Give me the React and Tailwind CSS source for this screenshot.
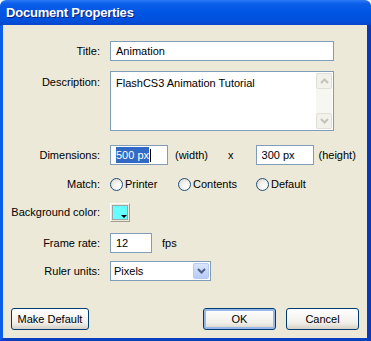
import { useState } from "react";

const inputBox = "h-[20px] border border-[#7f9db9] bg-white px-[5px] flex items-center";

const Label = ({ children, top = false }) => (
  <div className={`w-[97px] shrink-0 text-right ${top ? "pt-[3px] self-start" : ""}`}>{children}</div>
);

const Radio = ({ label, width }) => (
  <div className="flex shrink-0 items-center gap-[2px]" style={{ width }}>
    <span className="h-[13px] w-[13px] shrink-0 rounded-full border border-[#1c5180] bg-[radial-gradient(circle_at_70%_70%,#ffffff_0%,#f4f3ee_40%,#d8d4c6_100%)]" />
    <span>{label}</span>
  </div>
);

const XpButton = ({ children, width, focused = false }) => (
  <button
    className={`h-[22px] rounded-[3px] border border-[#003c74] bg-[linear-gradient(#ffffff,#f0efe9_70%,#d6d0c5)] ${
      focused ? "shadow-[inset_0_0_0_2px_#98b8ea]" : ""
    }`}
    style={{ width }}
  >
    {children}
  </button>
);

export default function App() {
  const [title] = useState("Animation");

  return (
    <div
      className="flex h-[341px] w-[371px] flex-col text-[11px] text-black"
      style={{ fontFamily: '"Liberation Sans", Arial, sans-serif' }}
    >
      <div className="flex h-[25px] shrink-0 items-center rounded-t-[6px] bg-[linear-gradient(#2d7bf6,#0a5ee9_15%,#0054e3_55%,#0150db_85%,#0a45c9)] pl-[6px]">
        <span className="text-[13px] font-bold tracking-[-0.2px] text-white [text-shadow:1px_1px_0_#0a1e80]">
          Document Properties
        </span>
      </div>

      <div className="flex flex-1 flex-col border-b-[3px] border-l-[3px] border-r-[4px] border-b-[#0a3fc0] border-l-[#0a5ee9] border-r-[#0a38b8] bg-[#ece9d8]">
        <div className="mt-[16px] flex items-center">
          <Label>Title:</Label>
          <div className={`${inputBox} ml-[10px] w-[224px]`}>{title}</div>
        </div>

        <div className="mt-[10px] flex">
          <Label top>Description:</Label>
          <div className="ml-[10px] flex h-[60px] w-[224px] border border-[#7f9db9] bg-white">
            <div className="flex-1 px-[5px] pt-[3px]">FlashCS3 Animation Tutorial</div>
            <div className="my-[1px] mr-[1px] flex w-[16px] flex-col justify-between bg-[#f7f7f2]">
              <div className="flex h-[16px] items-center justify-center rounded-[2px] border border-[#e2e0d6] bg-[#f2f1ea]">
                <svg width="9" height="6" viewBox="0 0 9 6">
                  <path d="M1 5 L4.5 1.5 L8 5" fill="none" stroke="#c5c3b8" strokeWidth="2" />
                </svg>
              </div>
              <div className="flex h-[16px] items-center justify-center rounded-[2px] border border-[#e2e0d6] bg-[#f2f1ea]">
                <svg width="9" height="6" viewBox="0 0 9 6">
                  <path d="M1 1 L4.5 4.5 L8 1" fill="none" stroke="#c5c3b8" strokeWidth="2" />
                </svg>
              </div>
            </div>
          </div>
        </div>

        <div className="mt-[14px] flex items-center">
          <Label>Dimensions:</Label>
          <div className={`${inputBox} ml-[10px] w-[58px]`}>
            <span className="bg-[#316ac5] text-white">500 px</span>
            <span className="ml-[1px] h-[13px] w-px bg-black" />
          </div>
          <span className="ml-[7px]">(width)</span>
          <span className="ml-[20px]">x</span>
          <div className={`${inputBox} ml-[22px] w-[58px]`}>300 px</div>
          <span className="ml-[5px]">(height)</span>
        </div>

        <div className="mt-[10px] flex h-[19px] items-center">
          <Label>Match:</Label>
          <div className="ml-[10px] flex">
            <Radio label="Printer" width={68} />
            <Radio label="Contents" width={78} />
            <Radio label="Default" />
          </div>
        </div>

        <div className="mt-[9px] flex items-center">
          <Label>Background color:</Label>
          <div className="relative ml-[10px] h-[19px] w-[20px] border border-t-white border-l-white border-r-[#a09d90] border-b-[#a09d90] p-px">
            <div className="h-full w-full border border-[#9aa6a6] bg-[#66ffff]" />
            <svg className="absolute bottom-[2px] right-[2px]" width="6" height="4" viewBox="0 0 6 4">
              <path d="M0 0 H6 L3 3 Z" fill="#000" />
            </svg>
          </div>
        </div>

        <div className="mt-[11px] flex items-center">
          <Label>Frame rate:</Label>
          <div className={`${inputBox} ml-[10px] w-[42px]`}>12</div>
          <span className="ml-[10px]">fps</span>
        </div>

        <div className="mt-[8px] flex items-center">
          <Label>Ruler units:</Label>
          <div className="ml-[10px] flex h-[20px] w-[101px] items-center border border-[#7f9db9] bg-white">
            <span className="flex-1 pl-[3px]">Pixels</span>
            <div className="mr-[1px] flex h-[16px] w-[16px] items-center justify-center rounded-[2px] border border-[#b9cbf3] bg-[linear-gradient(#dbe6fd,#b6cbf8)]">
              <svg width="9" height="6" viewBox="0 0 9 6">
                <path d="M1 1 L4.5 4.5 L8 1" fill="none" stroke="#4d6185" strokeWidth="2" />
              </svg>
            </div>
          </div>
        </div>

        <div className="mt-auto mb-[8px] flex items-center px-[8px]">
          <XpButton width={78}>Make Default</XpButton>
          <div className="flex-1" />
          <XpButton width={73} focused>
            OK
          </XpButton>
          <div className="w-[10px]" />
          <XpButton width={73}>Cancel</XpButton>
        </div>
      </div>
    </div>
  );
}
